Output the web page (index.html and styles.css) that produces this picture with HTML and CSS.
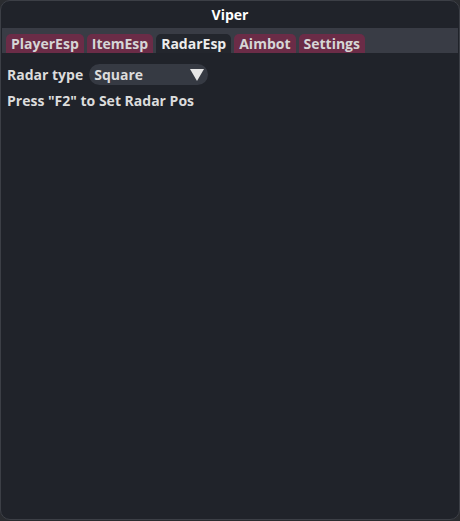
FILE: index.html
```html
<!DOCTYPE html>
<html>
<head>
<meta charset="utf-8">
<link rel="stylesheet" href="styles.css">
</head>
<body>
<div class="window">
  <div class="title">Viper</div>
  <div class="tabbar">
    <div class="tab">PlayerEsp</div>
    <div class="tab">ItemEsp</div>
    <div class="tab active">RadarEsp</div>
    <div class="tab">Aimbot</div>
    <div class="tab">Settings</div>
  </div>
  <div class="content">
    <div class="row">
      <span class="label">Radar type</span>
      <div class="combo">
        <span>Square</span>
        <svg class="arrow" width="14" height="12" viewBox="0 0 14 12"><polygon points="0,0 14,0 7,12" fill="#e6e6e6"/></svg>
      </div>
    </div>
    <div class="text">Press "F2" to Set Radar Pos</div>
  </div>
</div>
</body>
</html>
```
FILE: styles.css
```css
html, body {
  margin: 0;
  padding: 0;
  background: #2a2c30;
}
body {
  width: 460px;
  height: 521px;
  font-family: "Open Sans", sans-serif;
  font-weight: 700;
  font-size: 14px;
  color: #dcdcdc;
}
.window {
  box-sizing: border-box;
  width: 460px;
  height: 520px;
  background: #20232a;
  border: 1px solid #3c3f46;
  border-radius: 10px;
  display: flex;
  flex-direction: column;
  overflow: hidden;
}
.title {
  height: 27px;
  line-height: 27px;
  text-align: center;
  color: #ffffff;
  font-size: 14px;
}
.tabbar {
  margin: 0 1px;
  height: 25px;
  box-sizing: border-box;
  padding: 6px 4px 0;
  background: #393c45;
  display: flex;
  gap: 3px;
}
.tab {
  background: #6b2c47;
  color: #d6d6d6;
  border-radius: 5px 5px 0 0;
  padding: 0 5px 0 5px;
  height: 19px;
  line-height: 20px;
}
.tab.active {
  background: #23262d;
  color: #ececec;
}
.content {
  padding: 11px 6px;
  display: flex;
  flex-direction: column;
  gap: 6px;
}
.row {
  display: flex;
  align-items: center;
  gap: 6px;
}
.combo {
  width: 119px;
  height: 21px;
  box-sizing: border-box;
  border-radius: 11px;
  background: #363a43;
  display: flex;
  align-items: center;
  justify-content: space-between;
  padding: 0 4px 0 5px;
  color: #dcdcdc;
}
.arrow {
  display: block;
}
.text {
  line-height: 20px;
}
```
